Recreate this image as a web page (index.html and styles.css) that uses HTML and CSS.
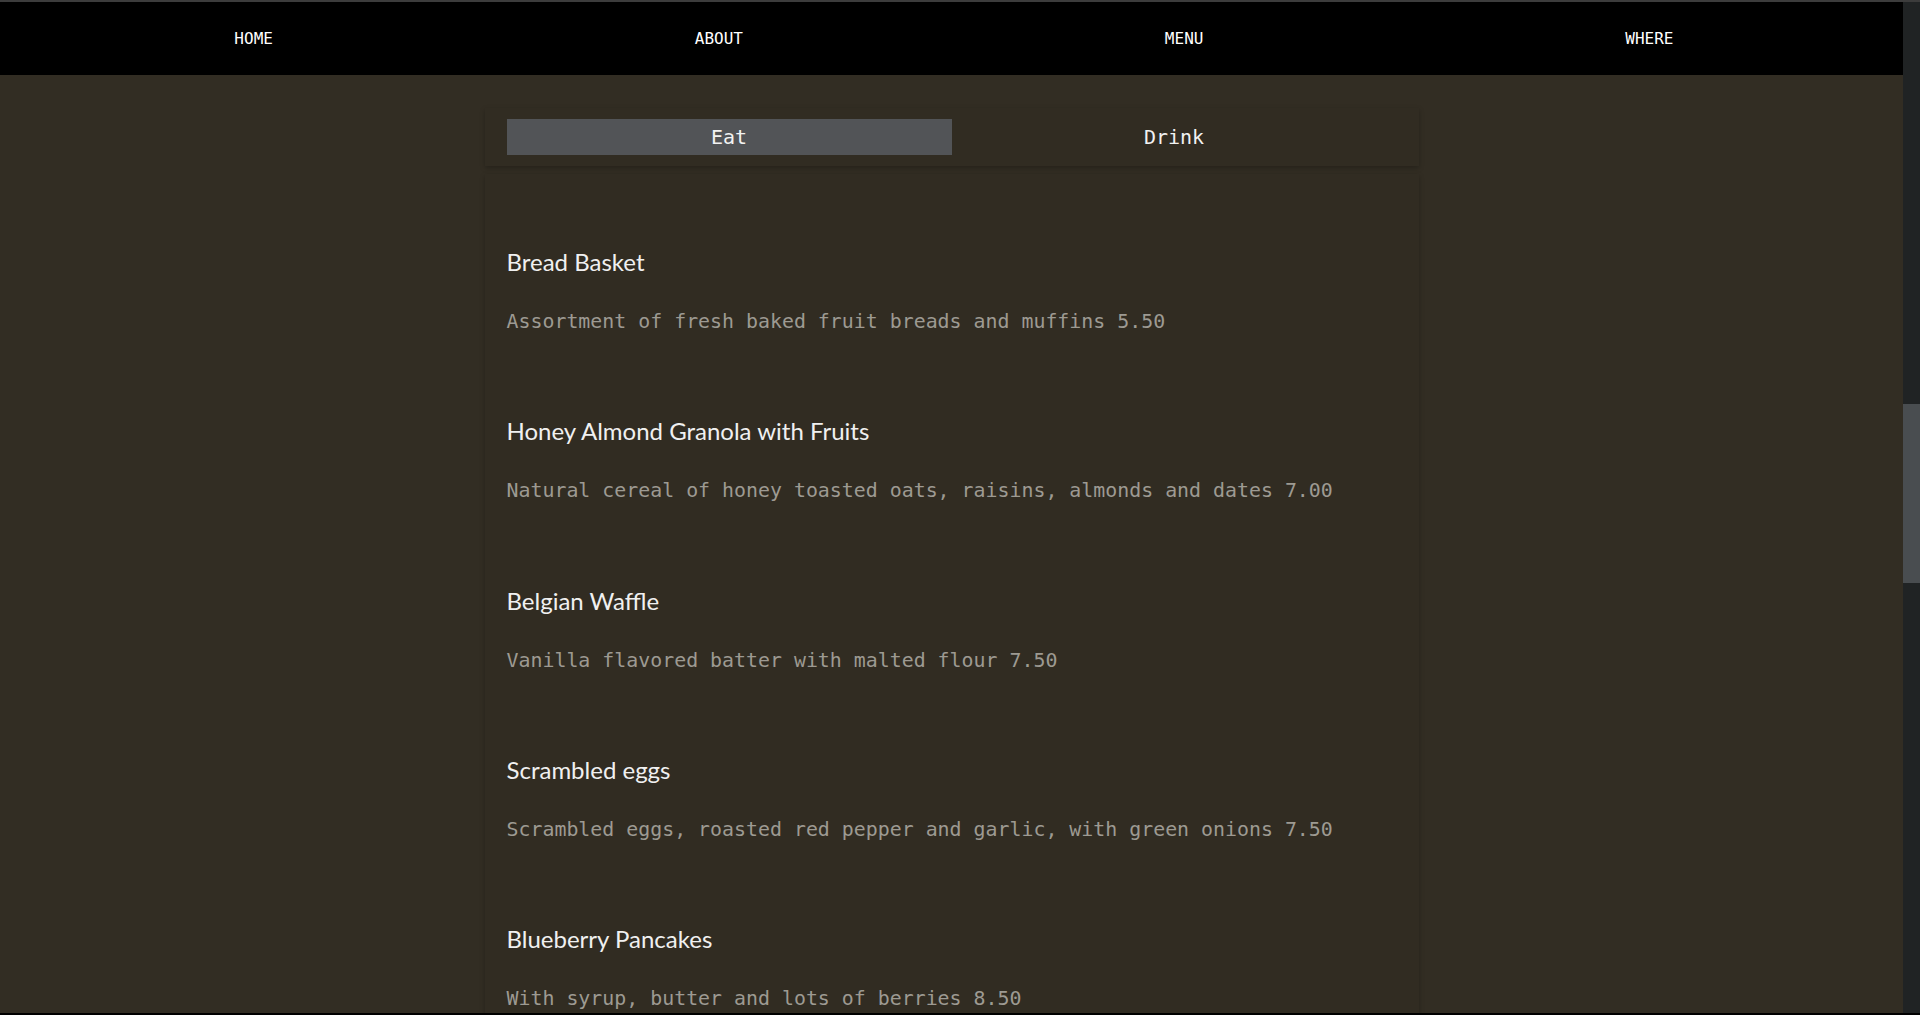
FILE: index.html
```html
<!DOCTYPE html>
<html lang="en">
<head>
<meta charset="utf-8">
<title>Menu</title>
<link rel="stylesheet" href="styles.css">
</head>
<body>
<div class="frame-top"></div>
<div class="window">
  <div class="page">
    <nav class="nav">
      <a class="nav-link" href="#">HOME</a>
      <a class="nav-link" href="#">ABOUT</a>
      <a class="nav-link" href="#">MENU</a>
      <a class="nav-link" href="#">WHERE</a>
    </nav>
    <main class="content">
      <div class="tabs">
        <button class="tab tab-active">Eat</button>
        <button class="tab">Drink</button>
      </div>
      <section class="card">
        <article class="item">
          <h3 class="item-title">Bread Basket</h3>
          <p class="item-desc">Assortment of fresh baked fruit breads and muffins 5.50</p>
        </article>
        <article class="item">
          <h3 class="item-title">Honey Almond Granola with Fruits</h3>
          <p class="item-desc">Natural cereal of honey toasted oats, raisins, almonds and dates 7.00</p>
        </article>
        <article class="item">
          <h3 class="item-title">Belgian Waffle</h3>
          <p class="item-desc">Vanilla flavored batter with malted flour 7.50</p>
        </article>
        <article class="item">
          <h3 class="item-title">Scrambled eggs</h3>
          <p class="item-desc">Scrambled eggs, roasted red pepper and garlic, with green onions 7.50</p>
        </article>
        <article class="item">
          <h3 class="item-title">Blueberry Pancakes</h3>
          <p class="item-desc">With syrup, butter and lots of berries 8.50</p>
        </article>
      </section>
    </main>
  </div>
  <div class="scrollbar">
    <div class="scroll-gap"></div>
    <div class="scroll-thumb"></div>
  </div>
</div>
<div class="frame-bottom"></div>
</body>
</html>
```
FILE: styles.css
```css
html, body {
  margin: 0;
  padding: 0;
  height: 100%;
  overflow: hidden;
}
body {
  display: flex;
  flex-direction: column;
  background: #322d23;
  font-family: "DejaVu Sans Mono", monospace;
}
.frame-top {
  height: 2px;
  background: #3c3c3c;
  flex: none;
}
.frame-bottom {
  height: 2px;
  background: #000;
  flex: none;
}
.window {
  flex: 1;
  display: flex;
  min-height: 0;
}
.page {
  flex: 1;
  display: flex;
  flex-direction: column;
  min-width: 0;
  overflow: hidden;
}
.scrollbar {
  width: 17px;
  flex: none;
  background: #202324;
  display: flex;
  flex-direction: column;
}
.scroll-gap {
  height: 402px;
}
.scroll-thumb {
  height: 179px;
  background: #494d50;
}
.nav {
  height: 73px;
  background: #000;
  display: grid;
  grid-template-columns: repeat(4, 1fr);
  align-items: center;
  padding: 0 21px;
  flex: none;
}
.nav-link {
  color: #fff;
  text-decoration: none;
  text-align: center;
  font-size: 16px;
  line-height: 20px;
  padding-top: 1px;
}
.content {
  width: 934px;
  margin: 33px auto 0;
  display: flex;
  flex-direction: column;
  gap: 8px;
}
.tabs {
  display: grid;
  grid-template-columns: 1fr 1fr;
  padding: 11px 22px 11px 22px;
  background: #312c22;
  box-shadow: 0 2px 5px rgba(0, 0, 0, 0.25);
}
.tab {
  height: 36px;
  border: 0;
  margin: 0;
  background: transparent;
  color: #f2f2f2;
  font-family: "DejaVu Sans Mono", monospace;
  font-size: 20px;
  padding: 0;
  cursor: pointer;
}
.tab-active {
  background: #525457;
}
.card {
  background: #312c22;
  box-shadow: 0 2px 5px rgba(0, 0, 0, 0.25);
  padding: 40px 22px 0;
}
.item {
  padding: 32px 0 49.3px;
}
.item-title {
  margin: 0;
  font-family: "Lato", "Open Sans", sans-serif;
  font-weight: 400;
  font-size: 24px;
  line-height: 32px;
  color: #f0f0f0;
}
.item-desc {
  margin: 32px 0 0;
  font-size: 19.9px;
  line-height: 24px;
  color: #9d9a92;
}
```
